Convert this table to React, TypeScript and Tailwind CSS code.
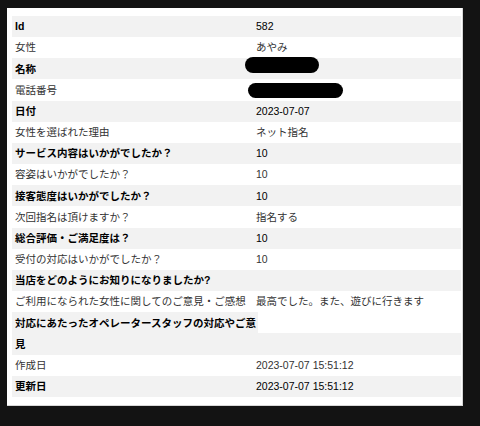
const rows: { label: string; value?: string; redact?: "short" | "long" }[] = [
  { label: "Id", value: "582" },
  { label: "女性", value: "あやみ" },
  { label: "名称", redact: "short" },
  { label: "電話番号", redact: "long" },
  { label: "日付", value: "2023-07-07" },
  { label: "女性を選ばれた理由", value: "ネット指名" },
  { label: "サービス内容はいかがでしたか？", value: "10" },
  { label: "容姿はいかがでしたか？", value: "10" },
  { label: "接客態度はいかがでしたか？", value: "10" },
  { label: "次回指名は頂けますか？", value: "指名する" },
  { label: "総合評価・ご満足度は？", value: "10" },
  { label: "受付の対応はいかがでしたか？", value: "10" },
  { label: "当店をどのようにお知りになりましたか?", value: "" },
  { label: "ご利用になられた女性に関してのご意見・ご感想", value: "最高でした。また、遊びに行きます" },
];

export default function App() {
  return (
    <div
      className="w-[480px] h-[426px] bg-[#131313] pt-[8px] pl-[7px]"
      style={{ fontFamily: '"Liberation Sans", "Noto Sans CJK JP", sans-serif' }}
    >
      <div className="w-[456px] h-[398px] bg-white pt-[8px] pl-[5px] border-r border-b border-[#d8d8d8]">
        <div className="w-[449px] text-[10.5px] leading-none">
          {rows.map((r, i) => {
            const odd = i % 2 === 0;
            return (
              <div key={i} className={`flex h-[21.17px] items-center ${odd ? "bg-[#f2f2f2]" : "bg-white"}`}>
                <div className={`w-[244px] pl-[3px] whitespace-nowrap ${odd ? "font-bold text-black" : "text-[#333]"}`}>
                  {r.label}
                </div>
                <div className={`flex-1 pl-[0px] whitespace-nowrap ${odd ? "text-black" : "text-[#333]"}`}>
                  {r.redact === "short" && (
                    <div className="ml-[-11px] -translate-y-[4px] w-[74px] h-[16px] rounded-full bg-black" />
                  )}
                  {r.redact === "long" && (
                    <div className="ml-[-8px] w-[95px] h-[15px] rounded-full bg-black" />
                  )}
                  {r.value}
                </div>
              </div>
            );
          })}
          {/* wrapped label row */}
          <div className="flex h-[21.17px] items-center">
            <div className="w-[246px] h-full flex items-center bg-[#f2f2f2] pl-[3px] font-bold text-black whitespace-nowrap">
              対応にあたったオペレータースタッフの対応やご意
            </div>
            <div className="flex-1 h-full bg-white" />
          </div>
          <div className="flex h-[21.17px] items-center bg-[#f2f2f2]">
            <div className="pl-[3px] font-bold text-black">見</div>
          </div>
          <div className="flex h-[21.17px] items-center bg-white text-[#333]">
            <div className="w-[244px] pl-[3px]">作成日</div>
            <div className="flex-1">2023-07-07 15:51:12</div>
          </div>
          <div className="flex h-[21.17px] items-center bg-[#f2f2f2] text-black">
            <div className="w-[244px] pl-[3px] font-bold">更新日</div>
            <div className="flex-1">2023-07-07 15:51:12</div>
          </div>
        </div>
      </div>
    </div>
  );
}
